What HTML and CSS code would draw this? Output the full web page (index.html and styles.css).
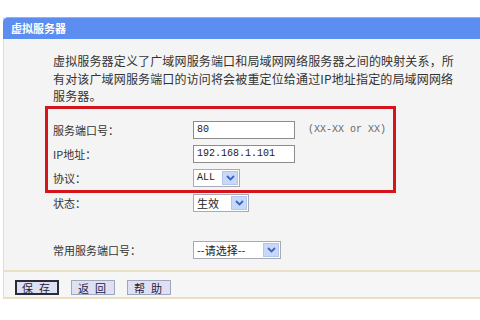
FILE: index.html
```html
<!DOCTYPE html>
<html lang="zh-CN">
<head>
    <meta charset="UTF-8">
    <title>虚拟服务器</title>
    <link rel="stylesheet" href="styles.css">
</head>
<body>

    <!-- VIRTUAL SERVER PANEL -->
    <div class="panel">
        <div class="panel-head">虚拟服务器</div>

        <div class="panel-body">
            <p class="intro">虚拟服务器定义了广域网服务端口和局域网网络服务器之间的映射关系，所<br>有对该广域网服务端口的访问将会被重定位给通过IP地址指定的局域网网络<br>服务器。</p>

            <div class="highlight">
                <div class="row">
                    <span class="label">服务端口号：</span>
                    <div class="field">80</div>
                    <span class="hint">(XX-XX or XX)</span>
                </div>
                <div class="row">
                    <span class="label">IP地址：</span>
                    <div class="field">192.168.1.101</div>
                </div>
                <div class="row">
                    <span class="label">协议：</span>
                    <div class="select sel-proto"><span class="sel-text">ALL</span><span class="sel-arrow"><svg width="9" height="6" viewBox="0 0 9 6"><path d="M1 1 L4.5 4.5 L8 1" fill="none" stroke="#3b63c4" stroke-width="1.8"/></svg></span></div>
                </div>
            </div>

            <div class="row row-state">
                <span class="label">状态：</span>
                <div class="select sel-state"><span class="sel-text cjk">生效</span><span class="sel-arrow"><svg width="9" height="6" viewBox="0 0 9 6"><path d="M1 1 L4.5 4.5 L8 1" fill="none" stroke="#3b63c4" stroke-width="1.8"/></svg></span></div>
            </div>

            <div class="row row-common">
                <span class="label">常用服务端口号：</span>
                <div class="select sel-common"><span class="sel-text cjk">--请选择--</span><span class="sel-arrow"><svg width="9" height="6" viewBox="0 0 9 6"><path d="M1 1 L4.5 4.5 L8 1" fill="none" stroke="#3b63c4" stroke-width="1.8"/></svg></span></div>
            </div>
        </div>

        <div class="panel-foot">
            <button class="btn btn-focus">保存</button>
            <button class="btn">返回</button>
            <button class="btn">帮助</button>
        </div>
    </div>

</body>
</html>
```

FILE: styles.css
```css
* { margin: 0; padding: 0; box-sizing: border-box; }
body {
    background: #ffffff;
    font-family: "Noto Sans CJK SC", "DejaVu Sans", sans-serif;
    color: #333;
    width: 480px;
    height: 320px;
    overflow: hidden;
}
.panel {
    margin: 17px 0 0 3px;
    border-left: 1px solid #e6dcc2;
}
.panel-head {
    height: 22px;
    background: #5b8ef0;
    border-top: 1px solid #8fb1f5;
    border-top-left-radius: 5px;
    margin-left: -1px;
    color: #fff;
    font-size: 11px;
    font-weight: bold;
    line-height: 20px;
    padding-left: 8px;
}
.panel-body {
    background: #f4f4f4;
    padding: 13px 0 7px 49px;
    height: 231px;
}
.intro {
    font-size: 12px;
    line-height: 17.5px;
    color: #333;
    white-space: nowrap;
    letter-spacing: 0.15px;
}
.highlight {
    margin: 1px 0 0 -8px;
    width: 351px;
    border: 3px solid #d5141c;
    padding: 9px 0 0 5px;
    height: 87px;
}
.row {
    display: flex;
    align-items: center;
    height: 24px;
}
.label {
    width: 140px;
    font-size: 11px;
    color: #333;
}
.field {
    width: 102px;
    height: 18px;
    background: #fff;
    border: 1px solid #8c8c8c;
    font-family: "Liberation Mono", monospace;
    font-size: 10px;
    line-height: 16px;
    padding-left: 3px;
    color: #222;
}
.hint {
    margin-left: 13px;
    font-family: "Liberation Mono", monospace;
    font-size: 10px;
    color: #666;
}
.select {
    display: flex;
    height: 18px;
    background: #fff;
    border: 1px solid #a5acb5;
}
.sel-text {
    flex: 1;
    font-family: "Liberation Mono", monospace;
    font-size: 10px;
    line-height: 16px;
    padding-left: 3px;
    color: #222;
}
.sel-text.cjk {
    font-family: "Noto Sans CJK SC", sans-serif;
    font-size: 11px;
}
.sel-arrow {
    width: 16px;
    margin: 1px;
    background: #c8d9f8;
    border: 1px solid #b3c7ee;
    display: flex;
    align-items: center;
    justify-content: center;
}
.sel-proto { width: 47px; }
.sel-state { width: 56px; }
.sel-common { width: 88px; }
.row-state { margin-top: -2px; }
.row-common { margin-top: 23px; }
.panel-foot {
    border-top: 2px solid #ebdfc3;
    border-bottom: 2px solid #ebdfc3;
    background: #f6f6f6;
    height: 29px;
    padding: 8px 0 0 11px;
    display: flex;
    gap: 12px;
    align-items: flex-start;
}
.btn {
    width: 44px;
    height: 15px;
    background: #dfe0f2;
    border: 1px solid #9ea6bd;
    font-family: "Noto Sans CJK SC", sans-serif;
    font-size: 11px;
    line-height: 12px;
    color: #1c2240;
    letter-spacing: 6px;
    padding-left: 6px;
    text-align: left;
}
.btn-focus {
    border: 2px solid #2b2b3a;
    padding-left: 5px;
}
```
